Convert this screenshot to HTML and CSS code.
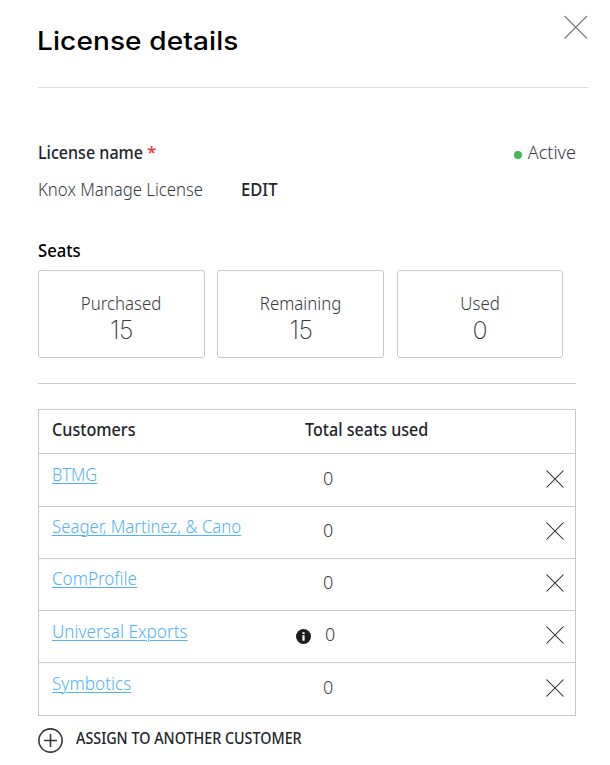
FILE: index.html
```html
<!DOCTYPE html>
<html lang="en">
<head>
<meta charset="utf-8">
<title>License details</title>
<link rel="stylesheet" href="styles.css">
</head>
<body>
<main class="panel">
  <header class="panel-header">
    <h1><span class="fit title-text">License details</span></h1>
    <svg class="close" viewBox="0 0 24 24"><path d="M.5 1l22.5 22.5M23 1L.5 23.5"/></svg>
  </header>
  <section class="license">
    <div class="line">
      <h2 class="name-cell"><span class="fit name-label">License name</span></h2><span class="required">*</span>
      <span class="status"><i class="dot"></i><span>Active</span></span>
    </div>
    <div class="line second">
      <span class="license-name"><span class="fit name-text">Knox Manage License</span></span>
      <span class="edit"><span class="fit edit-text">EDIT</span></span>
    </div>
  </section>
  <section class="seats">
    <h2><span class="fit seats-text">Seats</span></h2>
    <div class="cards">
      <div class="card"><span class="fit label">Purchased</span><span class="count">15</span></div>
      <div class="card"><span class="fit label">Remaining</span><span class="count">15</span></div>
      <div class="card"><span class="fit label">Used</span><span class="count">0</span></div>
    </div>
  </section>
  <section class="customers">
    <div class="row head"><span><b class="fit cust-text">Customers</b></span><span><b class="fit total-text">Total seats used</b></span></div>
    <div class="row tall"><span><a class="fit btmg">BTMG</a></span><span class="used">0</span><svg class="remove" viewBox="0 0 18 18"><path d="M.5.5l17 17M17.5.5l-17 17"/></svg></div>
    <div class="row"><span><a class="fit seager">Seager, Martinez, &amp; Cano</a></span><span class="used">0</span><svg class="remove" viewBox="0 0 18 18"><path d="M.5.5l17 17M17.5.5l-17 17"/></svg></div>
    <div class="row"><span><a class="fit comprofile">ComProfile</a></span><span class="used">0</span><svg class="remove" viewBox="0 0 18 18"><path d="M.5.5l17 17M17.5.5l-17 17"/></svg></div>
    <div class="row universal-row"><span><a class="fit universal">Universal Exports</a></span><span class="used with-info"><svg class="info" viewBox="0 0 15 15"><circle cx="7.5" cy="7.5" r="7.5"/><path d="M6.4 3.2h2.2v1.9H6.4zM6.4 6.3h2.2v5.5H6.4z"/></svg>0</span><svg class="remove" viewBox="0 0 18 18"><path d="M.5.5l17 17M17.5.5l-17 17"/></svg></div>
    <div class="row tall"><span><a class="fit symbotics">Symbotics</a></span><span class="used">0</span><svg class="remove" viewBox="0 0 18 18"><path d="M.5.5l17 17M17.5.5l-17 17"/></svg></div>
  </section>
  <div class="assign">
    <svg viewBox="0 0 26 26"><circle cx="12.5" cy="12.5" r="11.6"/><path d="M6 12.5h13M12.5 6v13"/></svg>
    <span class="fit assign-text">ASSIGN TO ANOTHER CUSTOMER</span>
  </div>
</main>
</body>
</html>
```
FILE: styles.css
```css
* { box-sizing: border-box; }
body {
  margin: 0;
  background: #fff;
  color: #36393d;
  font: 320 18px/24px "Noto Sans", sans-serif;
}
h1, h2 { margin: 0; }
h2, b { font-size: 18px; line-height: 24px; font-weight: 540; color: #22252a; }
svg { display: block; fill: none; }

/* Narrowed faces: each label keeps its own horizontal scale */
.fit { display: inline-block; white-space: nowrap; transform-origin: 0 50%; }
.title-text { transform: scaleX(1.12); }
.name-label { transform: scaleX(.893); }
.name-text { transform: scaleX(.93); }
.edit-text { transform: scaleX(.92); }
.seats-text { transform: scaleX(.925); }
.cust-text { transform: scaleX(.897); }
.total-text { transform: scaleX(.895); }
.btmg { transform: scaleX(.91); }
.seager { transform: scaleX(.931); }
.comprofile { transform: scaleX(.946); }
.universal { transform: scaleX(.952); }
.symbotics { transform: scaleX(.953); }
.assign-text { transform: scaleX(.895); }

.panel { width: 610px; height: 765px; padding: 0 0 0 38px; overflow: hidden; }
.panel-header { display: flex; justify-content: space-between; width: 550px; height: 88px; border-bottom: 1px solid #ddd; }
h1 { margin-top: 25px; margin-left: -1px; font: 540 25px/32px Inter, sans-serif; letter-spacing: .1px; color: #000; }
.close { width: 24px; height: 24px; margin: 15px 0 0; stroke: #777; stroke-width: 1.1; }

.license { width: 538px; padding-top: 52px; }
.line { display: flex; height: 24px; }
.second { margin-top: 13px; }
.name-cell { width: 109px; }
.required { color: #ef3434; font-weight: 500; font-size: 17px; }
.status { display: flex; margin-left: auto; }
.dot { width: 8px; height: 8px; margin: 11px 6px 0 0; border-radius: 50%; background: #45b955; }
.license-name { width: 202.5px; }
.edit { color: #22252a; font-weight: 540; }

.seats { width: 538px; height: 183px; padding-top: 37px; border-bottom: 1px solid #c8c8c8; }
.seats h2 { color: #000; }
.cards { display: grid; grid-template-columns: 167px 167px 166px; gap: 12.4px; margin-top: 8px; }
.card { display: flex; flex-direction: column; align-items: center; height: 88px; padding-top: 20px; border: 1px solid #c8c8c8; border-radius: 3px; }
.card .label { transform-origin: 50% 50%; transform: scaleX(.935); }
.count { margin-top: 1px; font: 200 25px/28px Inter, sans-serif; letter-spacing: -.5px; }

.customers { width: 538px; margin-top: 25px; border: 1px solid #c8c8c8; }
.row { display: grid; grid-template-columns: 253px 241px 18px; padding-left: 12.5px; height: 52px; padding-top: 7px; border-bottom: 1px solid #c8c8c8; }
.row.tall { height: 53px; padding-top: 8px; }
.row.head { height: 44px; }
.row:last-child { height: 52px; border-bottom: 0; }
.universal-row a { margin-top: 1px; }
a { color: #52b1fa; text-decoration: underline; text-decoration-thickness: 1px; text-underline-offset: 2px; }
.used { padding: 4px 0 0 18.5px; }
.with-info { display: flex; padding-left: 4.5px; margin-left: -13px; }
.info { width: 15px; height: 15px; margin: 7px 14px 0 0; }
.info circle { fill: #1d1b1c; }
.info path { fill: #fff; }
.remove { width: 18px; height: 18px; margin-top: 8px; stroke: #171717; stroke-width: 1.05; }

.assign { display: flex; padding-top: 12px; font-size: 16px; font-weight: 540; color: #22252a; line-height: 22px; }
.assign svg { width: 26px; height: 26px; margin-right: 12px; stroke: #343639; stroke-width: 1.6; }
.assign-text { margin-top: -1px; }
```
